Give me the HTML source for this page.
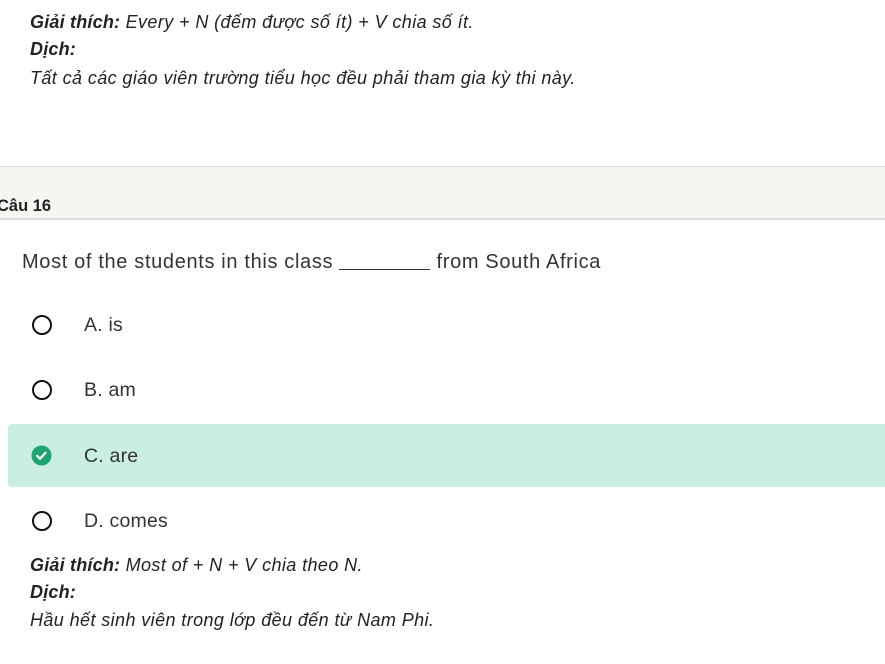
<!DOCTYPE html>
<html><head><meta charset="utf-8"><style>
body{margin:0;width:885px;height:664px;background:#fff;overflow:hidden;font-family:"Liberation Sans",sans-serif;color:#222;position:relative}
.a{position:absolute;white-space:nowrap}
.ex{font-style:italic;font-size:18px;letter-spacing:0.4px;color:#222;left:30px}
.ex b{font-weight:bold;letter-spacing:0.2px}
.band{position:absolute;left:0;top:166px;width:885px;height:51px;background:#f5f5f2;border-top:1px solid #ddd;border-bottom:2px solid #ddd}
.q{font-size:20px;color:#333;letter-spacing:0.65px}
.blank{display:inline-block;width:91px;border-bottom:1.5px solid #333;vertical-align:-2px}
.rad{position:absolute;left:32px;width:16px;height:16px;border:2.2px solid #111;border-radius:50%}
.opt{font-size:19.5px;color:#333;left:84px;letter-spacing:0.2px}
</style></head><body>
<div class="a ex" style="top:12px"><b>Giải thích:</b> Every + N (đếm được số ít) + V chia số ít.</div>
<div class="a ex" style="top:39px"><b>Dịch:</b></div>
<div class="a ex" style="top:68px">Tất cả các giáo viên trường tiểu học đều phải tham gia kỳ thi này.</div>
<div class="band"></div>
<div class="a" style="left:-3px;top:197px;font-size:16.5px;font-weight:bold;color:#222">Câu 16</div>
<div class="a q" style="left:22px;top:251px">Most of the students in this class <span class="blank"></span> from South Africa</div>
<div class="rad" style="top:315px"></div><div class="a opt" style="top:314px">A. is</div>
<div class="rad" style="top:380px"></div><div class="a opt" style="top:379px">B. am</div>
<div style="position:absolute;left:8px;top:424px;width:890px;height:63px;background:#cbeee3;border-radius:4px"></div>
<svg class="a" style="left:31px;top:445px" width="21" height="21" viewBox="0 0 21 21"><circle cx="10.5" cy="10.5" r="10" fill="#1ea672"/><path d="M6 10.8l3 3 5.5-6" stroke="#fff" stroke-width="2.2" fill="none" stroke-linecap="round" stroke-linejoin="round"/></svg>
<div class="a opt" style="top:445px">C. are</div>
<div class="rad" style="top:511px"></div><div class="a opt" style="top:510px">D. comes</div>
<div class="a ex" style="top:555px"><b>Giải thích:</b> Most of + N + V chia theo N.</div>
<div class="a ex" style="top:582px"><b>Dịch:</b></div>
<div class="a ex" style="top:610px">Hầu hết sinh viên trong lớp đều đến từ Nam Phi.</div>
</body></html>
